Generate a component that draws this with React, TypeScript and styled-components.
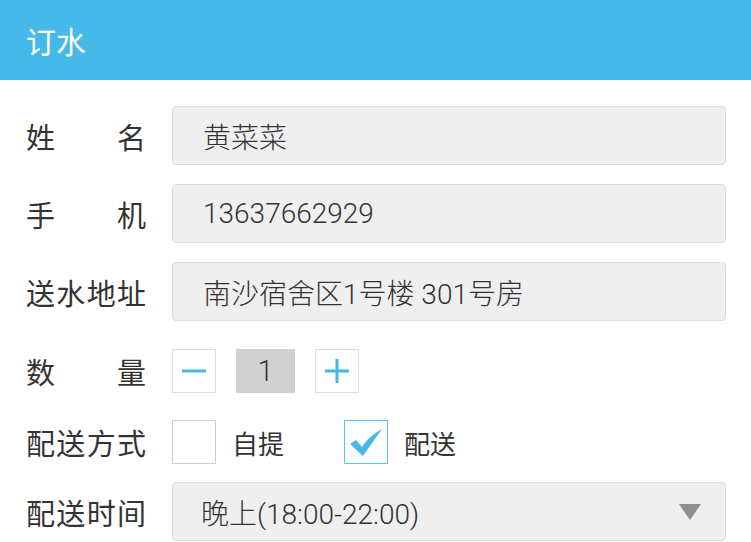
import React, { useState } from 'react';
import styled, { createGlobalStyle } from 'styled-components';

const GlobalStyle = createGlobalStyle`
  html, body {
    margin: 0;
    padding: 0;
    background: #ffffff;
    font-family: Roboto, "Noto Sans CJK SC", sans-serif;
    color: #333333;
  }
`;

const Page = styled.div`
  width: 751px;
  min-height: 542px;
  background: #ffffff;
`;

const Header = styled.header`
  height: 80px;
  background: #47b9e8;
  display: flex;
  align-items: center;
  padding-left: 26px;
  color: #ffffff;
  font-size: 30px;
  box-sizing: border-box;
`;

const Form = styled.div`
  display: flex;
  flex-direction: column;
  padding: 26px 25px 0 26px;
`;

const Row = styled.div<{ $height: number; $gap: number }>`
  display: flex;
  align-items: center;
  height: ${p => p.$height}px;
  margin-bottom: ${p => p.$gap}px;
`;

const Label = styled.div`
  width: 120px;
  flex-shrink: 0;
  margin-right: 26px;
  font-size: 29px;
  color: #333333;
  text-align: justify;
  text-align-last: justify;
  white-space: nowrap;
`;

const Field = styled.input`
  flex: 1;
  height: 59px;
  box-sizing: border-box;
  border: 1px solid #dcdcdc;
  border-radius: 4px;
  background: #efefef;
  padding: 0 0 0 30px;
  font-family: inherit;
  font-size: 28px;
  font-weight: 300;
  color: #333333;
  outline: none;
`;

const Stepper = styled.div`
  display: flex;
  align-items: center;
  gap: 20px;
`;

const StepButton = styled.button`
  width: 44px;
  height: 44px;
  box-sizing: border-box;
  border: 1px solid #dcdde3;
  background: #ffffff;
  padding: 0;
  display: flex;
  align-items: center;
  justify-content: center;
  cursor: pointer;
`;

const Count = styled.div`
  width: 59px;
  height: 44px;
  background: #d1d1d1;
  display: flex;
  align-items: center;
  justify-content: center;
  font-size: 29px;
  font-weight: 300;
  color: #333333;
`;

const Options = styled.div`
  display: flex;
  align-items: center;
`;

const Option = styled.label`
  display: flex;
  align-items: center;
  gap: 16px;
  margin-right: 60px;
  font-size: 26px;
  color: #333333;
  cursor: pointer;
`;

const Box = styled.span<{ $checked: boolean }>`
  width: 44px;
  height: 44px;
  box-sizing: border-box;
  border: 1px solid ${p => (p.$checked ? '#5cc3ee' : '#cdd0dc')};
  background: #ffffff;
  display: flex;
  align-items: center;
  justify-content: center;
`;

const Select = styled.div`
  flex: 1;
  height: 59px;
  box-sizing: border-box;
  border: 1px solid #dcdcdc;
  border-radius: 4px;
  background: #efefef;
  padding: 0 24px 0 28px;
  display: flex;
  align-items: center;
  justify-content: space-between;
  font-size: 28px;
  font-weight: 300;
  color: #333333;
`;

const Arrow = styled.span`
  width: 0;
  height: 0;
  border-left: 11px solid transparent;
  border-right: 11px solid transparent;
  border-top: 16px solid #8e8e8e;
`;

const Check = () => (
  <svg width="34" height="30" viewBox="0 0 34 30">
    <path d="M1 17 L7 13 L13 20 Q20 9 33 2 Q26 12 14 29 Z" fill="#45b8e8" />
  </svg>
);

const App: React.FC = () => {
  const [count, setCount] = useState(1);
  const [mode, setMode] = useState<'pickup' | 'deliver'>('deliver');

  return (
    <Page>
      <GlobalStyle />
      <Header>订水</Header>
      <Form>
        <Row $height={59} $gap={19}>
          <Label>姓名</Label>
          <Field readOnly value="黄菜菜" />
        </Row>
        <Row $height={59} $gap={19}>
          <Label>手机</Label>
          <Field readOnly value="13637662929" />
        </Row>
        <Row $height={59} $gap={28}>
          <Label>送水地址</Label>
          <Field readOnly value="南沙宿舍区1号楼 301号房" />
        </Row>
        <Row $height={44} $gap={27}>
          <Label>数量</Label>
          <Stepper>
            <StepButton onClick={() => setCount(Math.max(1, count - 1))}>
              <svg width="26" height="26" viewBox="0 0 26 26">
                <rect x="1" y="11.5" width="24" height="3" fill="#45b8e8" />
              </svg>
            </StepButton>
            <Count>{count}</Count>
            <StepButton onClick={() => setCount(count + 1)}>
              <svg width="26" height="26" viewBox="0 0 26 26">
                <rect x="1" y="11.5" width="24" height="3" fill="#45b8e8" />
                <rect x="11.5" y="1" width="3" height="24" fill="#45b8e8" />
              </svg>
            </StepButton>
          </Stepper>
        </Row>
        <Row $height={44} $gap={18}>
          <Label>配送方式</Label>
          <Options>
            <Option onClick={() => setMode('pickup')}>
              <Box $checked={mode === 'pickup'}>{mode === 'pickup' && <Check />}</Box>
              自提
            </Option>
            <Option onClick={() => setMode('deliver')}>
              <Box $checked={mode === 'deliver'}>{mode === 'deliver' && <Check />}</Box>
              配送
            </Option>
          </Options>
        </Row>
        <Row $height={59} $gap={0}>
          <Label>配送时间</Label>
          <Select>
            <span>晚上(18:00-22:00)</span>
            <Arrow />
          </Select>
        </Row>
      </Form>
    </Page>
  );
};

export default App;
